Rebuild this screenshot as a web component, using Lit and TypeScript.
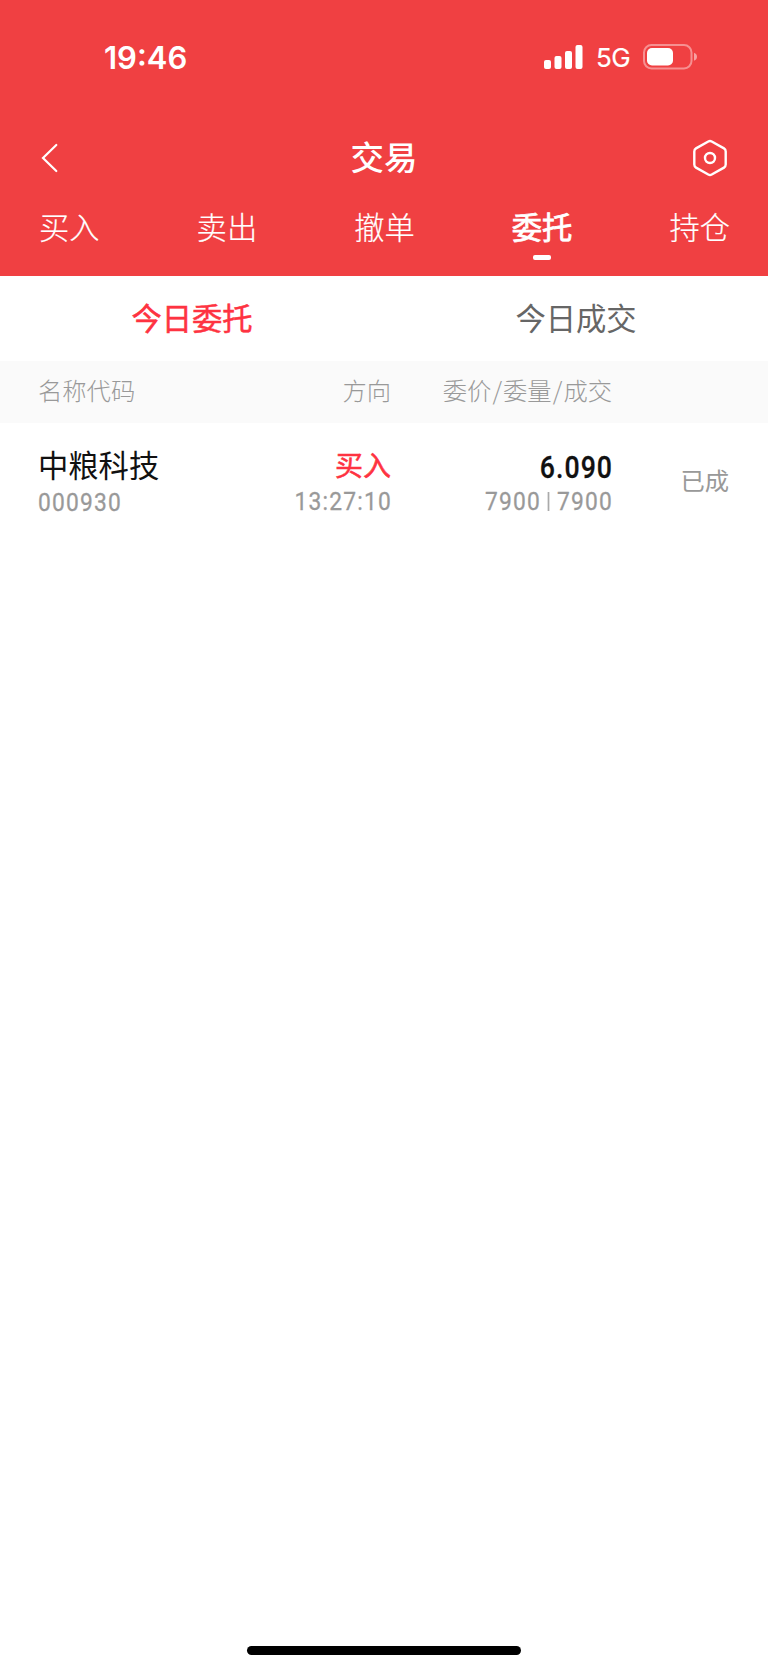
import { LitElement, html, css } from "lit";
import { customElement } from "lit/decorators.js";
import { classMap } from "lit/directives/class-map.js";

const TABS = ["买入", "卖出", "撤单", "委托", "持仓"];
const ACTIVE_TAB = "委托";

@customElement("app-root")
export class AppRoot extends LitElement {
  static styles = css`
    :host {
      display: flex;
      flex-direction: column;
      height: 1669px;
      background: #fff;
      font-family: "Noto Sans CJK SC", sans-serif;
      white-space: nowrap;
    }
    * { box-sizing: border-box; }
    svg { display: block; flex: none; }
    .head { height: 276px; flex: none; background: #f04042; color: #fff; }
    .status {
      height: 114px; display: flex; justify-content: space-between;
      padding: 0 71px 0 104px; align-items: center;
      font-family: Inter, sans-serif;
    }
    .time { font-size: 31px; font-weight: 600; line-height: 40px; padding-top: 1px; }
    .signals { display: flex; align-items: center; }
    .net { font-size: 26px; line-height: 40px; margin: 2px 13px 0 13px; letter-spacing: -0.6px; -webkit-text-stroke: 0.2px #fff; }
    .nav {
      height: 88px; display: grid; grid-template-columns: 1fr auto 1fr;
      align-items: center; padding: 0 40px;
    }
    .nav svg:last-child { justify-self: end; }
    .title { font-size: 33.5px; font-weight: 500; line-height: 48px; padding-bottom: 5px; }
    .tabs { display: flex; justify-content: space-between; padding: 2px 38px 0 39px; }
    .tab {
      display: flex; flex-direction: column; align-items: center;
      font-size: 30.3px; line-height: 44px; font-weight: 300;
      -webkit-text-stroke: 0.2px currentColor;
    }
    .tab.on { font-weight: 400; -webkit-text-stroke: 0.8px currentColor; }
    .tab.on::after {
      content: ""; width: 18px; height: 5px; border-radius: 2px;
      background: #fff; margin-top: 7px;
    }
    .sub {
      height: 85px; flex: none; display: grid; grid-template-columns: 1fr 1fr;
      place-items: center; font-size: 30.3px; color: #666; padding-bottom: 3px;
    }
    .sub .on { color: #fe3341; -webkit-text-stroke: 0.5px currentColor; }
    .row {
      display: grid; grid-template-columns: 179px 174px 221px 1fr;
      padding: 0 39px 0 38px; text-align: right;
    }
    .row > :first-child { text-align: left; }
    .labels {
      height: 62px; flex: none; background: #fafafa; align-items: start;
      font-size: 24.3px; font-weight: 300; color: #999; line-height: 58px;
    }
    .slash { margin: 0 1.1px; }
    .order { padding-top: 19px; }
    .name { font-size: 30.3px; line-height: 44px; color: #111; }
    .side { font-size: 28px; line-height: 44px; color: #fe3341; -webkit-text-stroke: 0.5px currentColor; }
    .num {
      font-family: Roboto, sans-serif; font-size: 26.5px; line-height: 30px; color: #999;
      transform: scaleX(0.86); transform-origin: right; letter-spacing: 1.4px; margin-right: -1px;
      -webkit-text-stroke: 0.3px currentColor;
    }
    .code { transform-origin: left; margin-top: 1px; }
    .price { font-size: 31px; line-height: 44px; font-weight: 500; color: #111; margin-top: 4px; margin-bottom: -4px; letter-spacing: 1.2px; }
    .bar {
      display: inline-block; width: 1.5px; height: 19px; background: #aaa;
      margin: 0 9px 0 8px; vertical-align: -1px;
    }
    .state { font-size: 24.3px; line-height: 76px; color: #999; }
    .grow { flex: 1; }
    .home { width: 274px; height: 9px; border-radius: 5px; background: #000; margin: 0 auto 14.5px; }
  `;

  render() {
    return html`
      <div class="head">
        <div class="status">
          <span class="time">19:46</span>
          <div class="signals">
            <svg width="39" height="26" viewBox="0 0 39 26" fill="#fff">
              <rect x="0" y="16" width="7" height="9" rx="2" />
              <rect x="10.5" y="12" width="7" height="13" rx="2" />
              <rect x="21" y="7" width="7" height="18" rx="2" />
              <rect x="31.5" y="1" width="7" height="24" rx="2" />
            </svg>
            <span class="net">5G</span>
            <svg width="54" height="26" viewBox="0 0 54 26">
              <rect x="1" y="1" width="47.5" height="23.5" rx="7.5" fill="none" stroke="#fff" stroke-opacity=".42" stroke-width="2" />
              <rect x="4" y="4" width="26" height="17.5" rx="5" fill="#fff" />
              <path d="M51 8.8Q54 10 54 12.8T51 16.8Z" fill="#fff" fill-opacity=".5" />
            </svg>
          </div>
        </div>
        <div class="nav">
          <svg width="20" height="30" viewBox="0 0 20 30" fill="none" stroke="#fff" stroke-width="2.2" stroke-linecap="round">
            <path d="M16.3 2L3 15L16.3 28" />
          </svg>
          <span class="title">交易</span>
          <svg width="36" height="38" viewBox="0 0 36 38" fill="none" stroke="#fff" stroke-width="2.4" stroke-linejoin="round">
            <path d="M16.3 2.5Q18 1.6 19.7 2.5L32 9.4Q33.7 10.4 33.7 12.4V25.6Q33.7 27.6 32 28.6L19.7 35.5Q18 36.4 16.3 35.5L4 28.6Q2.3 27.6 2.3 25.6V12.4Q2.3 10.4 4 9.4Z" />
            <circle cx="18" cy="19" r="5" />
          </svg>
        </div>
        <div class="tabs">
          ${TABS.map((t) => html`<div class=${classMap({ tab: true, on: t === ACTIVE_TAB })}>${t}</div>`)}
        </div>
      </div>
      <div class="sub"><span class="on">今日委托</span><span>今日成交</span></div>
      <div class="row labels">
        <span>名称代码</span><span>方向</span>
        <span>委价<span class="slash">/</span>委量<span class="slash">/</span>成交</span>
      </div>
      <div class="row order">
        <div><div class="name">中粮科技</div><div class="num code">000930</div></div>
        <div><div class="side">买入</div><div class="num">13:27:10</div></div>
        <div>
          <div class="num price">6.090</div>
          <div class="num">7900<span class="bar"></span>7900</div>
        </div>
        <div class="state">已成</div>
      </div>
      <div class="grow"></div>
      <div class="home"></div>
    `;
  }
}
